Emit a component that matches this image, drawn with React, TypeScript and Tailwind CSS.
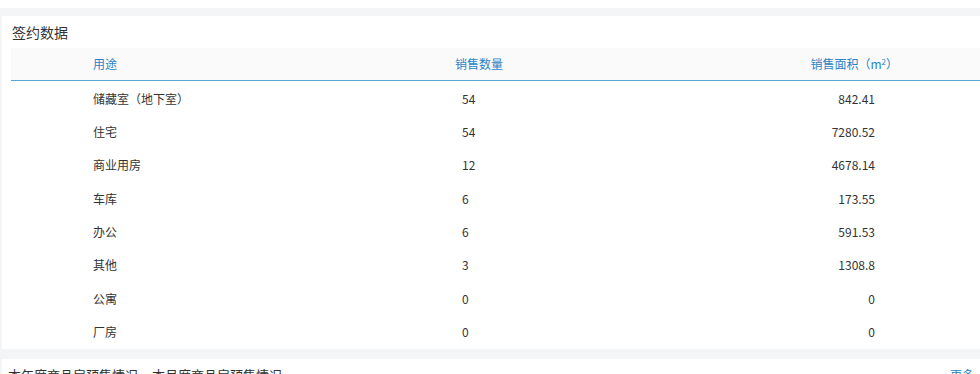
const rows = [
  { use: '储藏室（地下室）', count: '54', area: '842.41' },
  { use: '住宅', count: '54', area: '7280.52' },
  { use: '商业用房', count: '12', area: '4678.14' },
  { use: '车库', count: '6', area: '173.55' },
  { use: '办公', count: '6', area: '591.53' },
  { use: '其他', count: '3', area: '1308.8' },
  { use: '公寓', count: '0', area: '0' },
  { use: '厂房', count: '0', area: '0' },
]

export default function App() {
  return (
    <div
      className="w-[980px] h-[374px] overflow-hidden bg-[#f4f5f7]"
      style={{ fontFamily: '"Noto Sans CJK SC", "Noto Sans", sans-serif' }}
    >
      <div className="h-[8px] bg-white" />

      {/* 签约数据 */}
      <div className="mt-[8px] ml-[2px] bg-white">
        <div className="h-[32px] leading-[32px] pl-[10px] text-[14px] text-[#333]">签约数据</div>

        <div className="ml-[9px]">
          <div className="flex h-[33px] items-center bg-[#fafafa] border-b border-[#5ba7d4] text-[12px] text-[#2b84c6]">
            <div className="w-[444px] pl-[82px]">用途</div>
            <div className="w-[300px]">销售数量</div>
            <div className="flex-1 text-right pr-[82px]">
              销售面积（m<sup className="text-[8px]">2</sup>）
            </div>
          </div>

          <div className="pt-[1px]">
            {rows.map((r) => (
              <div key={r.use} className="flex h-[33.33px] items-center text-[12px] text-[#333]">
                <div className="w-[444px] pl-[82px]">{r.use}</div>
                <div className="w-[300px] pl-[7px]">{r.count}</div>
                <div className="flex-1 text-right pr-[105px]">{r.area}</div>
              </div>
            ))}
          </div>
        </div>
      </div>

      {/* 预售情况 */}
      <div className="mt-[10px] ml-[2px] bg-white">
        <div className="flex h-[32px] items-center pl-[6px] pr-[6px]">
          <div className="flex gap-[14px] text-[13px] text-[#333]">
            <span>本年度商品房预售情况</span>
            <span>本月度商品房预售情况</span>
          </div>
          <span className="ml-auto text-[12px] text-[#2b84c6]">更多</span>
        </div>
      </div>
    </div>
  )
}
